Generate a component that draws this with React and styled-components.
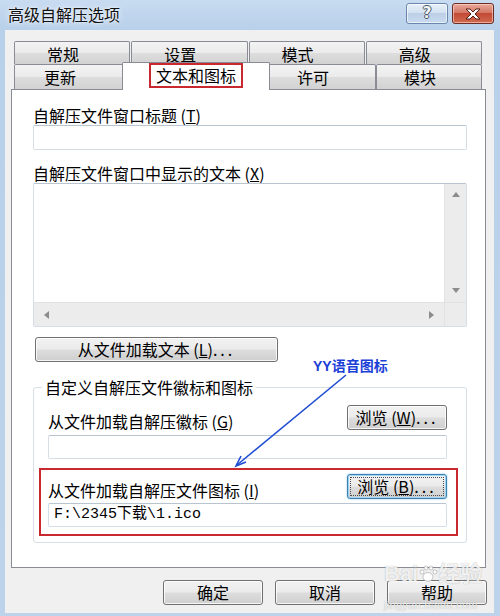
import React from 'react';
import styled, { createGlobalStyle, css } from 'styled-components';

const GlobalStyle = createGlobalStyle`
  html, body {
    margin: 0;
    padding: 0;
    background: #fff;
  }
  body {
    font-family: "Noto Sans CJK SC", "Noto Sans", sans-serif;
  }
`;

const UI_FONT = `"Noto Sans CJK SC", "Noto Sans", sans-serif`;

const Window = styled.div`
  position: relative;
  width: 500px;
  height: 616px;
  box-sizing: border-box;
  padding: 0 6px 3px 5px;
  background: linear-gradient(#c8dbf1, #b9d0ea 30px, #bdd3eb);
  display: flex;
  flex-direction: column;
  overflow: hidden;
`;

const TitleBar = styled.div`
  height: 30px;
  flex: none;
  display: flex;
  align-items: flex-start;
`;

const Title = styled.div`
  margin: 5px 0 0 3px;
  font: 16px/18px ${UI_FONT};
  color: #111;
  text-shadow: 0 0 6px rgba(255, 255, 255, 0.95), 0 0 2px rgba(255, 255, 255, 0.9);
`;

const CaptionButtons = styled.div`
  margin-left: auto;
  padding-top: 3px;
  display: flex;
  gap: 4px;
`;

const CaptionButton = styled.div`
  width: 42px;
  height: 21px;
  box-sizing: border-box;
  border-radius: 3px;
  display: flex;
  align-items: center;
  justify-content: center;
  ${p => p.$close
    ? css`
        border: 1px solid #6e2a24;
        background: linear-gradient(#e9a99b, #d47866 45%, #c24a36 50%, #d06a4e);
        box-shadow: inset 0 0 0 1px rgba(255, 220, 210, 0.6);
      `
    : css`
        border: 1px solid #6b87ad;
        background: linear-gradient(#e9f1fa, #d3e1f1 45%, #bccfe7 50%, #c9dbef);
        box-shadow: inset 0 0 0 1px rgba(255, 255, 255, 0.6);
      `}
`;

const HelpGlyph = styled.span`
  font: bold 15px/1 "DejaVu Sans", sans-serif;
  color: #f6f6f6;
  text-shadow: 1px 0 0 #4a5666, -1px 0 0 #4a5666, 0 1px 0 #4a5666, 0 -1px 0 #4a5666;
`;

const Client = styled.div`
  flex: 1;
  background: #f0f0f0;
  padding: 11px 8px 0 6px;
  display: flex;
  flex-direction: column;
`;

const TabStrip = styled.div`
  margin: 0 4px 0 3px;
  display: flex;
  flex-direction: column;
`;

const TopRow = styled.div`
  display: grid;
  grid-template-columns: repeat(4, 1fr);
  column-gap: 1px;
  height: 23px;
`;

const BottomRow = styled.div`
  display: flex;
  height: 25px;
`;

const Tab = styled.div`
  box-sizing: border-box;
  flex: none;
  width: ${p => (p.$w ? `${p.$w}px` : 'auto')};
  border: 1px solid #898c95;
  border-bottom: none;
  border-radius: 2px 2px 0 0;
  background: linear-gradient(#f3f3f3, #ebebeb 48%, #dddddd 52%, #d2d2d2);
  padding: ${p => p.$pt}px 18px 0 0;
  text-align: center;
  font: 16px/${p => p.$lh || 18}px ${UI_FONT};
  color: #000;
`;

const ActiveTab = styled.div`
  position: relative;
  z-index: 2;
  box-sizing: border-box;
  flex: none;
  width: 148px;
  height: 28px;
  margin: -2px -2px -1px;
  border: 1px solid #898c95;
  border-bottom: none;
  border-radius: 2px 2px 0 0;
  background: #fff;
  display: flex;
  justify-content: center;
  align-items: flex-start;
`;

const Marked = styled.span`
  box-sizing: border-box;
  border: 2px solid #c8282e;
  padding: 0 5px;
  height: 25px;
  font: 16px/21px ${UI_FONT};
  color: #000;
  white-space: nowrap;
`;

const Panel = styled.div`
  height: 479px;
  box-sizing: border-box;
  border: 1px solid #898c95;
  background: #fff;
  padding: 16px 18px 0 21px;
  display: flex;
  flex-direction: column;
`;

const Label = styled.div`
  font: 16px/18px ${UI_FONT};
  color: #000;
  margin-top: ${p => p.$mt || 0}px;
  margin-bottom: ${p => p.$mb || 0}px;
  white-space: nowrap;
`;

const Input = styled.div`
  box-sizing: border-box;
  height: ${p => p.$h || 25}px;
  margin-top: ${p => p.$mt || 0}px;
  border: 1px solid #d5dde7;
  border-top-color: #b9c4d1;
  border-radius: 2px;
  background: #fff;
  padding: 0 5px;
  font: 15px/22px "Liberation Mono", "Noto Sans CJK SC", monospace;
  color: #000;
`;

const TextArea = styled.div`
  box-sizing: border-box;
  height: 144px;
  border: 1px solid #d5dde7;
  border-top-color: #b9c4d1;
  border-radius: 2px;
  display: grid;
  grid-template-columns: 1fr 22px;
  grid-template-rows: 1fr 24px;
  overflow: hidden;
`;

const TextContent = styled.div`
  background: #fff;
`;

const ScrollTrack = styled.div`
  background: #ececec;
  display: flex;
  flex-direction: ${p => (p.$vertical ? 'column' : 'row')};
  justify-content: space-between;
  align-items: center;
  padding: ${p => (p.$vertical ? '6px 0 7px' : '0 8px 0 9px')};
  ${p => (p.$vertical
    ? css`border-left: 1px solid #e2e2e2;`
    : css`border-top: 1px solid #e2e2e2;`)}
`;

const Corner = styled.div`
  background: #ececec;
  border-top: 1px solid #e2e2e2;
  border-left: 1px solid #e2e2e2;
`;

const Button = styled.button`
  position: relative;
  box-sizing: border-box;
  flex: none;
  width: ${p => p.$w}px;
  height: 25px;
  margin: ${p => p.$m || 0};
  padding: 0;
  border: 1px solid #707070;
  border-radius: 3px;
  background: linear-gradient(#f2f2f2, #ebebeb 48%, #dddddd 52%, #cfcfcf);
  box-shadow: inset 0 0 0 1px rgba(255, 255, 255, 0.8);
  font: 16px/21px ${UI_FONT};
  color: #000;
  white-space: nowrap;
  ${p => p.$focused && css`
    border-color: #3c7fb1;
    box-shadow: inset 0 0 0 1px #9fd5f2, 0 0 2px #7cc0ea;
    &::after {
      content: '';
      position: absolute;
      inset: 2px;
      border: 1px dotted #4a4a4a;
    }
  `}
`;

const Dots = styled.span`
  letter-spacing: 3px;
`;

const Group = styled.fieldset`
  margin: 16px 0 0;
  padding: 0 8px 6px 5px;
  border: 1px solid #d5dfe5;
  border-radius: 3px;
`;

const Legend = styled.legend`
  margin-left: 3px;
  padding: 0 3px;
  font: 16px/18px ${UI_FONT};
  color: #000;
`;

const Section = styled.div`
  margin: ${p => p.$m};
  padding: ${p => p.$p || 0};
  border: ${p => (p.$marked ? '2px solid #c8282e' : 'none')};
`;

const Row = styled.div`
  display: flex;
  justify-content: space-between;
  align-items: flex-end;
`;

const ButtonBar = styled.div`
  margin: 12px -1px 0 0;
  display: flex;
  justify-content: flex-end;
  gap: 12px;
`;

const Note = styled.div`
  position: absolute;
  left: 313px;
  top: 357px;
  font: bold 14px/18px "Liberation Sans", "Noto Sans CJK SC", sans-serif;
  color: #1c3fd8;
`;

const ArrowLayer = styled.svg`
  position: absolute;
  left: 0;
  top: 0;
  pointer-events: none;
`;

const Watermark = styled.div`
  position: absolute;
  left: 384px;
  top: 562px;
  color: rgba(255, 255, 255, 0.85);
  text-shadow: 0 0 1px rgba(0, 0, 0, 0.35);
  pointer-events: none;
  display: flex;
  flex-direction: column;
`;

const MarkLine = styled.div`
  display: flex;
  align-items: center;
  font: bold 22px/24px "Liberation Sans", "Noto Sans CJK SC", sans-serif;
`;

const MarkSmall = styled.div`
  margin-top: 13px;
  font: 11px/13px "Liberation Sans", sans-serif;
  letter-spacing: 0.3px;
`;

const Arrow = ({ dir }) => {
  const pts = {
    up: '4,2 0,7 8,7',
    down: '0,1 8,1 4,6',
    left: '6,0 6,8 1,4',
    right: '1,0 1,8 6,4',
  }[dir];
  return (
    <svg width="8" height="8" viewBox="0 0 8 8">
      <polygon points={pts} fill="#8c8c8c" />
    </svg>
  );
};

const Mn = ({ k }) => (
  <>
    {' ('}<u>{k}</u>{')'}
  </>
);

const App = () => {
  return (
    <>
      <GlobalStyle />
      <Window>
        <TitleBar>
          <Title>高级自解压选项</Title>
          <CaptionButtons>
            <CaptionButton>
              <HelpGlyph>?</HelpGlyph>
            </CaptionButton>
            <CaptionButton $close>
              <svg width="18" height="12" viewBox="0 0 18 12">
                <path
                  d="M2 1 H6 L9 4 L12 1 H16 L11 6 L16 11 H12 L9 8 L6 11 H2 L7 6 Z"
                  fill="#fbfbfb"
                  stroke="#5a1e18"
                  strokeWidth="1"
                  strokeLinejoin="round"
                />
              </svg>
            </CaptionButton>
          </CaptionButtons>
        </TitleBar>

        <Client>
          <TabStrip>
            <TopRow>
              <Tab $pt={4} $lh={17}>常规</Tab>
              <Tab $pt={4} $lh={17}>设置</Tab>
              <Tab $pt={4} $lh={17}>模式</Tab>
              <Tab $pt={4} $lh={17}>高级</Tab>
            </TopRow>
            <BottomRow>
              <Tab $w={110} $pt={3}>更新</Tab>
              <ActiveTab>
                <Marked>文本和图标</Marked>
              </ActiveTab>
              <Tab $w={108} $pt={3}>许可</Tab>
              <Tab $w={106} $pt={3}>模块</Tab>
            </BottomRow>
          </TabStrip>

          <Panel>
            <Label $mb={1}>自解压文件窗口标题<Mn k="T" /></Label>
            <Input />

            <Label $mt={14} $mb={1}>自解压文件窗口中显示的文本<Mn k="X" /></Label>
            <TextArea>
              <TextContent />
              <ScrollTrack $vertical>
                <Arrow dir="up" />
                <Arrow dir="down" />
              </ScrollTrack>
              <ScrollTrack>
                <Arrow dir="left" />
                <Arrow dir="right" />
              </ScrollTrack>
              <Corner />
            </TextArea>

            <Button $w={243} $m="10px 0 0 2px">
              从文件加载文本<Mn k="L" /><Dots>...</Dots>
            </Button>

            <Group>
              <Legend>自定义自解压文件徽标和图标</Legend>

              <Section $m="9px 11px 0 9px">
                <Row>
                  <Label>从文件加载自解压徽标<Mn k="G" /></Label>
                  <Button $w={100}>
                    浏览<Mn k="W" /><Dots>...</Dots>
                  </Button>
                </Row>
                <Input $h={24} $mt={5} />
              </Section>

              <Section $marked $m="9px 0 0" $p="4px 9px 7px 7px">
                <Row>
                  <Label>从文件加载自解压文件图标<Mn k="I" /></Label>
                  <Button $w={100} $focused>
                    浏览<Mn k="B" /><Dots>...</Dots>
                  </Button>
                </Row>
                <Input $h={24} $mt={4}>F:\2345下载\1.ico</Input>
              </Section>
            </Group>
          </Panel>

          <ButtonBar>
            <Button $w={100}>确定</Button>
            <Button $w={100}>取消</Button>
            <Button $w={100}>帮助</Button>
          </ButtonBar>
        </Client>

        <Note>YY语音图标</Note>
        <ArrowLayer width="500" height="616">
          <line x1="346" y1="375" x2="237" y2="465" stroke="#1e4cd3" strokeWidth="1.6" />
          <polyline
            points="246,462 236,466 241,456"
            fill="none"
            stroke="#1e4cd3"
            strokeWidth="1.6"
          />
        </ArrowLayer>

        <Watermark>
          <MarkLine>
            Bai
            <svg width="20" height="20" viewBox="0 0 20 20">
              <g fill="rgba(255,255,255,0.85)" stroke="rgba(0,0,0,0.25)" strokeWidth="0.8">
                <ellipse cx="10" cy="13" rx="5" ry="4.5" />
                <circle cx="4" cy="8" r="2" />
                <circle cx="8" cy="4" r="2" />
                <circle cx="13" cy="4" r="2" />
                <circle cx="17" cy="8" r="2" />
              </g>
            </svg>
            经验
          </MarkLine>
          <MarkSmall>jingyan.baidu.com</MarkSmall>
        </Watermark>
      </Window>
    </>
  );
};

export default App;
